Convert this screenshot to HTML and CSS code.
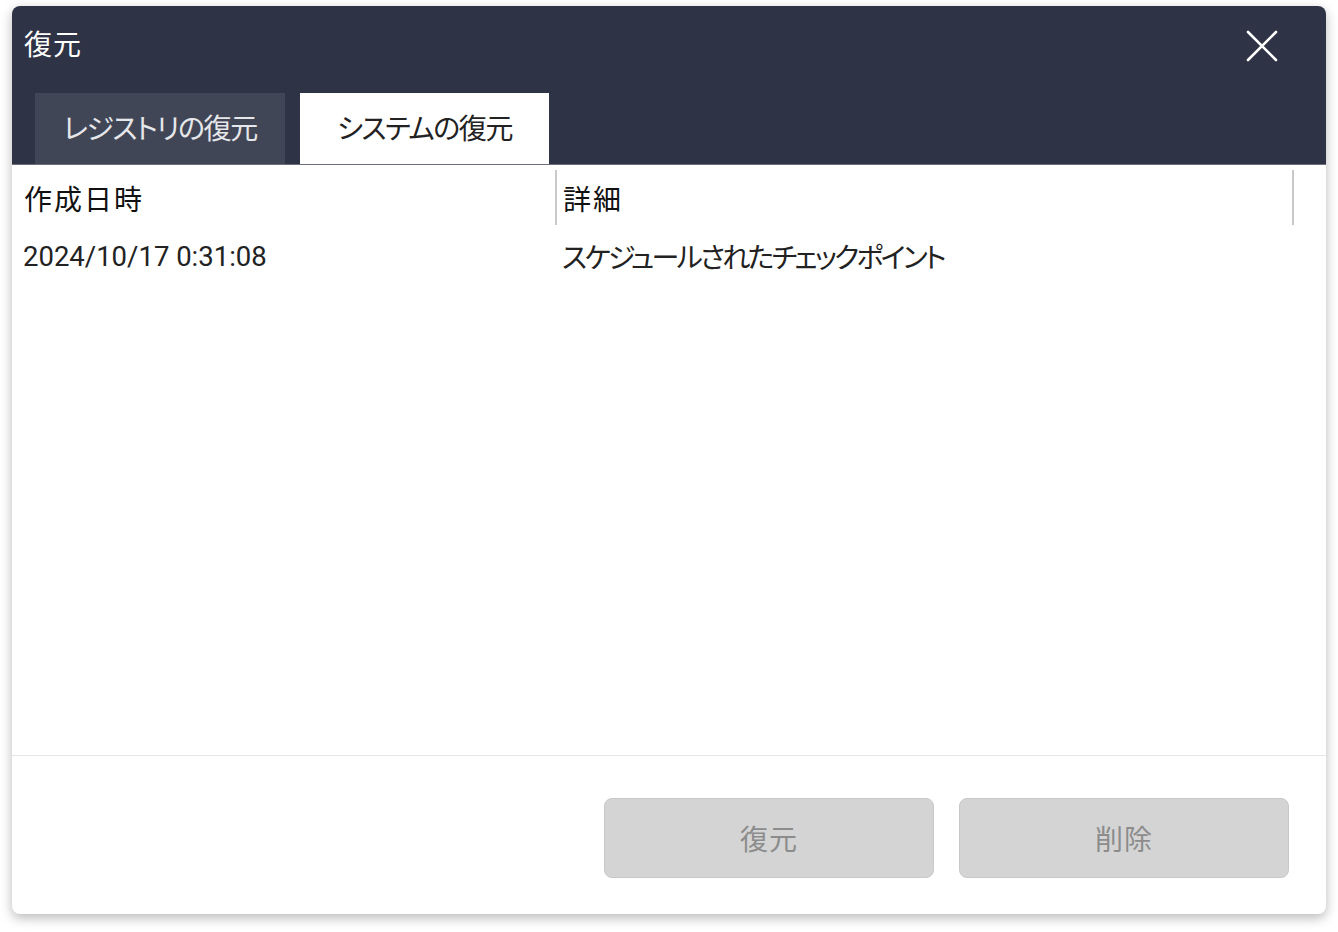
FILE: index.html
```html
<!DOCTYPE html>
<html lang="ja">
<head>
<meta charset="utf-8">
<title>復元</title>
<link rel="stylesheet" href="styles.css">
</head>
<body>
<div class="dialog">
  <div class="header">
    <div class="title-row">
      <div class="title">復元</div>
      <button class="close" aria-label="閉じる">
        <svg width="32" height="32" viewBox="0 0 32 32"><path d="M2 2 L30 30 M30 2 L2 30" stroke="#ffffff" stroke-width="2.6" stroke-linecap="round" fill="none"/></svg>
      </button>
    </div>
    <div class="tabs">
      <div class="tab">レジストリの復元</div>
      <div class="tab active">システムの復元</div>
    </div>
  </div>
  <div class="list">
    <div class="list-head">
      <div class="col col-date">作成日時</div>
      <div class="col col-detail">詳細</div>
      <div class="col-end"></div>
    </div>
    <div class="list-row">
      <div class="col col-date">2024/10/17 0:31:08</div>
      <div class="col col-detail">スケジュールされたチェックポイント</div>
    </div>
  </div>
  <div class="footer">
    <button class="btn">復元</button>
    <button class="btn">削除</button>
  </div>
</div>
</body>
</html>
```

FILE: styles.css
```css
html, body {
  margin: 0;
  padding: 0;
  background: #ffffff;
}
body {
  font-family: "Noto Sans CJK JP", "Noto Sans", sans-serif;
  font-feature-settings: "palt";
  padding: 6px 12px 18px 12px;
}
.dialog {
  width: 1314px;
  height: 908px;
  border-radius: 8px;
  background: #ffffff;
  box-shadow: 0 4px 12px rgba(0, 0, 0, 0.28);
  overflow: hidden;
  display: flex;
  flex-direction: column;
}
.header {
  background: #2e3345;
  height: 159px;
  box-sizing: border-box;
  border-bottom: 1px solid #6b6f7c;
  display: flex;
  flex-direction: column;
}
.title-row {
  height: 87px;
  display: flex;
  align-items: flex-start;
  justify-content: space-between;
  padding: 0 48px 0 12px;
}
.title {
  color: #ffffff;
  font-size: 28px;
  line-height: 28px;
  margin-top: 23px;
  letter-spacing: 1px;
}
.close {
  background: none;
  border: none;
  padding: 0;
  margin-top: 24px;
  width: 32px;
  height: 32px;
  display: flex;
}
.tabs {
  display: flex;
  gap: 15px;
  padding-left: 23px;
  flex: 1;
}
.tab {
  width: 250px;
  background: #414656;
  color: #e6e7ea;
  font-size: 28px;
  letter-spacing: -1.4px;
  display: flex;
  align-items: center;
  justify-content: center;
  padding-bottom: 3px;
  box-sizing: border-box;
}
.tab.active {
  background: #ffffff;
  color: #222222;
  width: 249px;
}
.list {
  flex: 1;
  border-bottom: 1px solid #e6e6e6;
  padding-top: 5px;
}
.list-head {
  display: flex;
  height: 55px;
  align-items: stretch;
}
.list-head .col {
  display: flex;
  align-items: center;
  color: #111111;
  font-size: 28px;
  letter-spacing: 2px;
}
.col-date {
  width: 543px;
  box-sizing: border-box;
  padding-left: 12px;
}
.col-detail {
  width: 737px;
  box-sizing: border-box;
  padding-left: 6px;
  border-left: 2px solid #c9c9c9;
}
.col-end {
  width: 2px;
  background: #c9c9c9;
}
.list-row {
  display: flex;
  height: 62px;
  align-items: center;
  font-size: 28px;
  color: #222222;
}
.list-row .col-detail {
  border-left: 2px solid transparent;
  padding-left: 5px;
  letter-spacing: -2.7px;
}
.list-row .col-date {
  padding-left: 11px;
  font-family: Roboto, "Noto Sans CJK JP", sans-serif;
  font-size: 27.5px;
}
.footer {
  height: 158px;
  display: flex;
  align-items: center;
  justify-content: flex-end;
  gap: 25px;
  padding-right: 37px;
  padding-top: 6px;
  box-sizing: border-box;
}
.btn {
  width: 330px;
  height: 80px;
  border-radius: 8px;
  background: #d4d4d4;
  border: 1px solid #c8c8c8;
  color: #8c8c8c;
  font-family: "Noto Sans CJK JP", sans-serif;
  font-size: 28px;
  letter-spacing: 1px;
  padding: 0;
}
```
